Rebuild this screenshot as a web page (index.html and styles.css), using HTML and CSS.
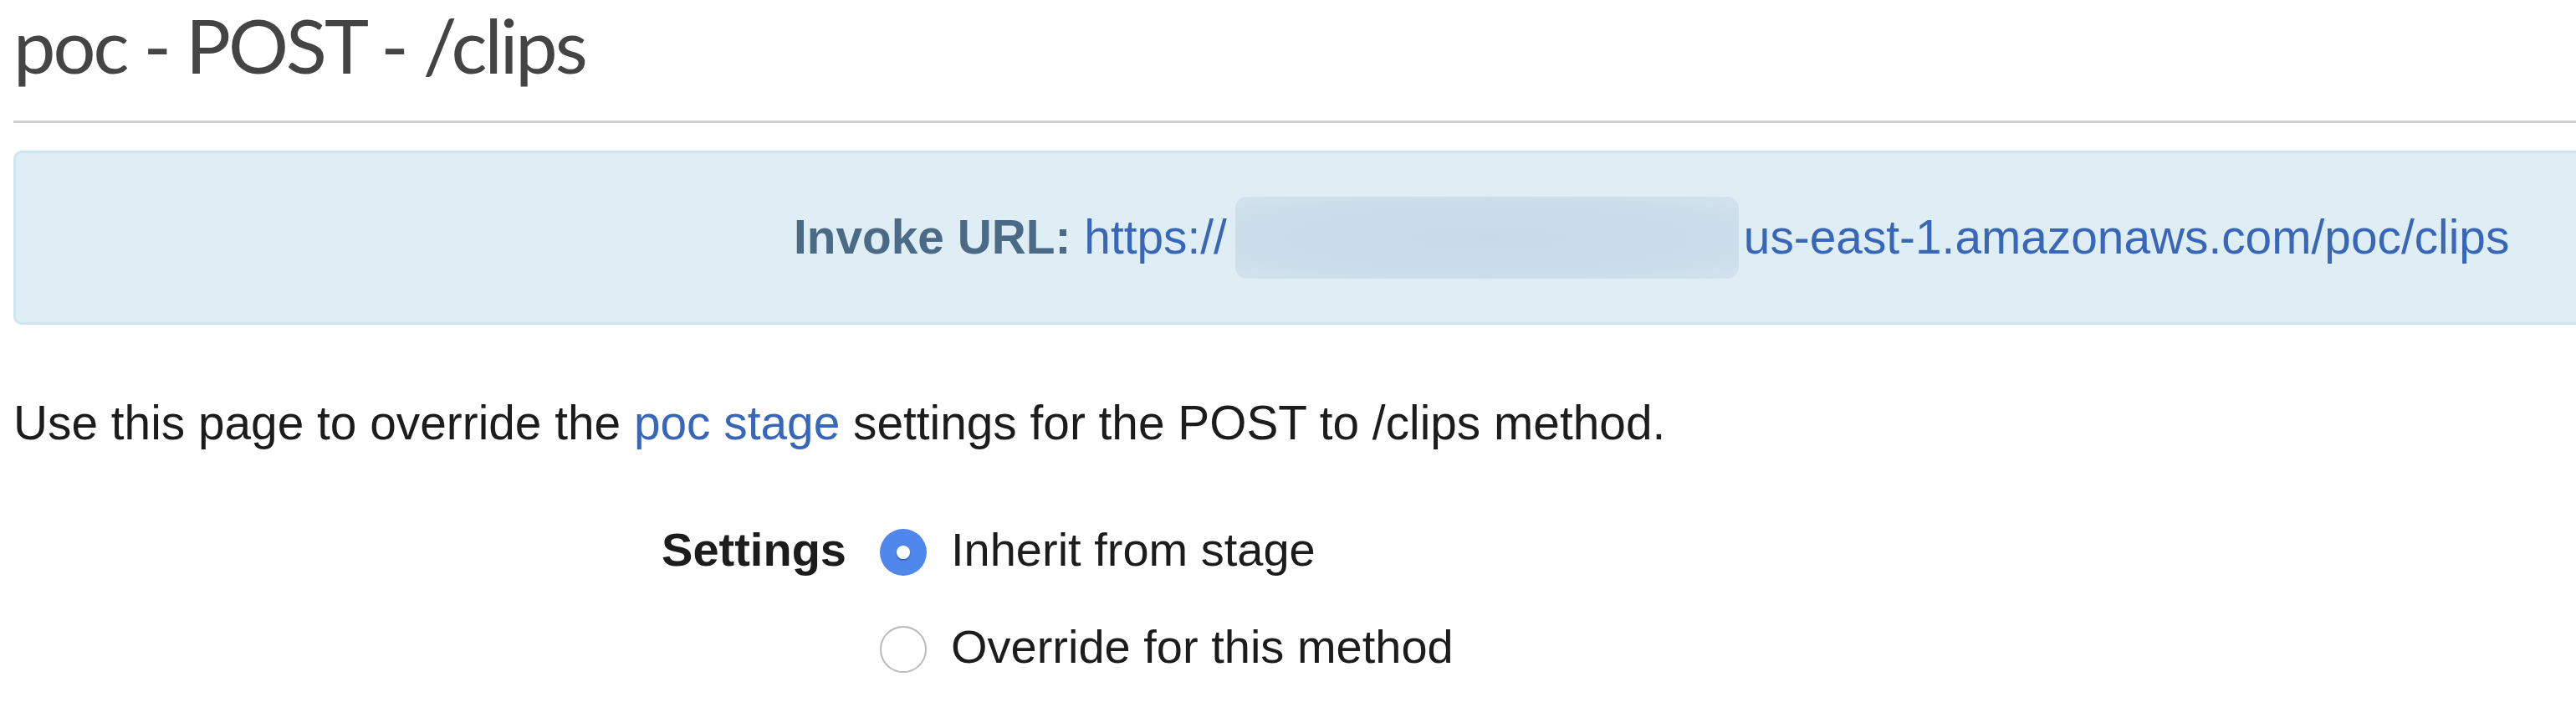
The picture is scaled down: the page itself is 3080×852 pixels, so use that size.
FILE: index.html
```html
<!DOCTYPE html>
<html lang="en">
<head>
<meta charset="utf-8">
<title>poc - POST - /clips</title>
<link rel="stylesheet" href="styles.css">
</head>
<body>
<div class="page">
  <h1 class="title">poc - POST - /clips</h1>

  <div class="invoke">
    <span class="invoke-label">Invoke URL:</span>
    <a class="invoke-link" href="#">https://<span class="redacted" aria-hidden="true"></span>us-east-1.amazonaws.com/poc/clips</a>
  </div>

  <p class="intro">Use this page to override the <a class="link" href="#">poc stage</a> settings for the POST to /clips method.</p>

  <div class="settings">
    <div class="settings-label">Settings</div>
    <label class="option"><input class="radio" type="radio" name="mode" checked><span>Inherit from stage</span></label>
    <div></div>
    <label class="option"><input class="radio" type="radio" name="mode"><span>Override for this method</span></label>
  </div>
</div>
</body>
</html>
```

FILE: styles.css
```css
html, body {
  margin: 0;
  padding: 0;
  background: #ffffff;
}

body {
  overflow: hidden;
  font-family: "Liberation Sans", Arial, Helvetica, sans-serif;
  font-size: 56px;
  color: #1c1c1c;
}

.page {
  padding: 0 0 0 16px;
}

.title {
  margin: 0;
  padding: 0 0 37px 0;
  font-family: Lato, "Open Sans", sans-serif;
  font-weight: 400;
  font-size: 90px;
  letter-spacing: -3px;
  line-height: 107px;
  color: #444444;
  border-bottom: 3px solid #d0d0d0;
}

.invoke {
  margin-top: 33px;
  width: calc(100% + 40px);
  display: flex;
  align-items: center;
  padding-left: 930px;
  background: #dfedf5;
  border: 3px solid #cde5ef;
  border-radius: 10px;
  box-sizing: border-box;
  height: 208px;
  line-height: 62px;
  white-space: nowrap;
  font-size: 56.8px;
}

.invoke-label {
  font-weight: 700;
  color: #4a6a86;
  margin-right: 16px;
}

.invoke-link {
  display: flex;
  align-items: center;
  color: #3867b9;
  text-decoration: none;
}

.redacted {
  display: inline-block;
  width: 602px;
  height: 98px;
  margin: 0 6px 0 10px;
  border-radius: 14px;
  background: radial-gradient(ellipse at center, #c8dae9 0%, #cbdcea 60%, #d2e2ee 100%);
}

.intro {
  margin: 86px 0 0 0;
  line-height: 64px;
  font-size: 56.8px;
}

.link {
  color: #3867b9;
  text-decoration: none;
}

.settings {
  margin-top: 87px;
  display: grid;
  grid-template-columns: 996px auto;
  column-gap: 40px;
  row-gap: 52px;
  line-height: 64px;
}

.settings-label {
  text-align: right;
  font-weight: 700;
  color: #1c1c1c;
}

.option {
  display: flex;
  align-items: center;
  gap: 29px;
}

.radio {
  appearance: none;
  -webkit-appearance: none;
  margin: 6px 0 0 0;
  width: 56px;
  height: 56px;
  border-radius: 50%;
  box-sizing: border-box;
  border: 2px solid #b9b9b9;
  background: #ffffff;
  flex: none;
  position: relative;
}

.radio:checked {
  border: none;
  background: #4f87ec;
}

.radio:checked::after {
  content: "";
  position: absolute;
  left: 20px;
  top: 20px;
  width: 16px;
  height: 16px;
  border-radius: 50%;
  background: #ffffff;
  box-shadow: 0 2px 2px rgba(0, 0, 0, 0.25);
}
```
